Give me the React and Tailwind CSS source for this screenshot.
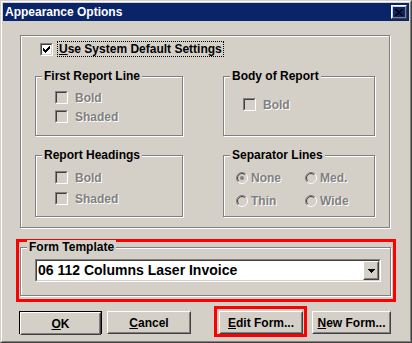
import React from 'react';

const CHECK = ['......X', '.....XX', 'X...XXX', 'XX.XXX.', 'XXXXX..', '.XXX...', '..X....'];
const CLOSE_X = ['XX....XX', '.XX..XX.', '..XXXX..', '...XX...', '..XXXX..', '.XX..XX.', 'XX....XX'];
const ARROW = ['XXXXXXX', '.XXXXX.', '..XXX..', '...X...'];

const Pixels = ({ rows, color = '#000' }) => {
  const w = rows[0].length;
  const h = rows.length;
  return (
    <svg width={w} height={h} viewBox={`0 0 ${w} ${h}`} shapeRendering="crispEdges">
      {rows.flatMap((r, y) =>
        [...r].map((c, x) =>
          c === 'X' ? <rect key={`${x}-${y}`} x={x} y={y} width="1" height="1" fill={color} /> : null
        )
      )}
    </svg>
  );
};

// classic raised 3d box
const Raised = ({ className = '', children }) => (
  <div className={`flex border border-t-white border-l-white border-b-[#404040] border-r-[#404040] ${className}`}>
    <div className="flex-1 flex items-center justify-center border border-t-[#d4d0c8] border-l-[#d4d0c8] border-b-[#808080] border-r-[#808080]">
      {children}
    </div>
  </div>
);

const Check = ({ checked, disabled }) => (
  <div className="w-[13px] h-[13px] shrink-0 flex border border-t-[#808080] border-l-[#808080] border-b-white border-r-white">
    <div
      className={`flex-1 flex items-center justify-center border border-t-[#404040] border-l-[#404040] border-b-[#d4d0c8] border-r-[#d4d0c8] ${
        disabled ? 'bg-[#d4d0c8]' : 'bg-white'
      }`}
    >
      {checked && <Pixels rows={CHECK} />}
    </div>
  </div>
);

const arc = (r, from, to) => {
  const d = r / Math.SQRT2;
  const p = { bl: [6 - d, 6 + d], tr: [6 + d, 6 - d] };
  return `M${p[from][0]} ${p[from][1]} A${r} ${r} 0 0 1 ${p[to][0]} ${p[to][1]}`;
};

const Radio = ({ checked }) => (
  <svg width="12" height="12" viewBox="0 0 12 12" className="shrink-0">
    <circle cx="6" cy="6" r="4.5" fill="#d4d0c8" />
    <path d={arc(5.5, 'bl', 'tr')} stroke="#808080" fill="none" />
    <path d={arc(5.5, 'tr', 'bl')} stroke="#ffffff" fill="none" />
    <path d={arc(4.5, 'bl', 'tr')} stroke="#404040" fill="none" />
    <path d={arc(4.5, 'tr', 'bl')} stroke="#d4d0c8" fill="none" />
    {checked && <circle cx="6" cy="6" r="2" fill="#808080" />}
  </svg>
);

const dim = 'text-[#808080] [text-shadow:1px_1px_0_#ffffff]';

const CheckRow = ({ label }) => (
  <div className="flex items-center gap-[7px] h-[13px]">
    <Check disabled />
    <span className={`${dim} leading-[14px]`}>{label}</span>
  </div>
);

const RadioRow = ({ label, checked }) => (
  <div className="flex items-center gap-[3px] w-[69px]">
    <Radio checked={checked} />
    <span className={`${dim} leading-[14px]`}>{label}</span>
  </div>
);

const Group = ({ label, className = '', children }) => (
  <div className={`border border-[#808080] shadow-[1px_1px_0_#ffffff,inset_1px_1px_0_#ffffff] ${className}`}>
    <div className="-mt-[8px] ml-[6px] px-[2px] w-fit bg-[#d4d0c8] leading-[14px]">{label}</div>
    {children}
  </div>
);

const Button = ({ children, className = '' }) => (
  <Raised className={`h-[23px] ${className}`}>
    <span className="leading-[14px]">{children}</span>
  </Raised>
);

export default function App() {
  return (
    <div className="w-[412px] h-[343px] bg-[#d4d0c8] border border-t-[#d4d0c8] border-l-[#d4d0c8] border-b-[#404040] border-r-[#404040] font-['Liberation_Sans',Arial,sans-serif] font-bold text-[12px] text-black">
      <div className="h-full flex flex-col p-px border border-t-white border-l-white border-b-[#808080] border-r-[#808080]">
        {/* Title bar */}
        <div className="h-[18px] shrink-0 bg-[#0a246a] flex items-center justify-between pl-[2px] pr-[2px]">
          <span className="text-white leading-none">Appearance Options</span>
          <Raised className="w-[16px] h-[14px]">
            <Pixels rows={CLOSE_X} />
          </Raised>
        </div>

        {/* Main frame */}
        <div className="ml-[17px] mt-[14px] w-[370px] h-[193px] pl-[14px] pt-[5px] border border-[#808080] shadow-[1px_1px_0_#ffffff,inset_1px_1px_0_#ffffff]">
          <div className="ml-[5px] flex items-center gap-[4px]">
            <Check checked />
            <span className="border border-dotted border-black px-px leading-[14px]">
              <u>U</u>se System Default Settings
            </span>
          </div>

          <div className="mt-[19px] flex gap-[40px]">
            <Group label="First Report Line" className="w-[148px] h-[60px]">
              <div className="pl-[19px] pt-[8px] flex flex-col gap-[6px]">
                <CheckRow label="Bold" />
                <CheckRow label="Shaded" />
              </div>
            </Group>
            <Group label="Body of Report" className="w-[152px] h-[60px]">
              <div className="pl-[19px] pt-[15px]">
                <CheckRow label="Bold" />
              </div>
            </Group>
          </div>

          <div className="mt-[19px] flex gap-[40px]">
            <Group label="Report Headings" className="w-[148px] h-[62px]">
              <div className="pl-[19px] pt-[9px] flex flex-col gap-[8px]">
                <CheckRow label="Bold" />
                <CheckRow label="Shaded" />
              </div>
            </Group>
            <Group label="Separator Lines" className="w-[152px] h-[62px]">
              <div className="pl-[12px] pt-[9px] grid grid-cols-[69px_69px] gap-y-[9px]">
                <RadioRow label="None" checked />
                <RadioRow label="Med." />
                <RadioRow label="Thin" />
                <RadioRow label="Wide" />
              </div>
            </Group>
          </div>
        </div>

        {/* Form template (highlighted) */}
        <div className="ml-[13px] mt-[11px] w-[380px] h-[63px] border-[3px] border-[#ff0000] pl-px pt-[5px]">
          <Group label="Form Template" className="w-[371px] h-[49px]">
            <div className="ml-[14px] mt-[5px] w-[346px] h-[23px] flex border border-t-[#808080] border-l-[#808080] border-b-white border-r-white">
              <div className="flex-1 flex items-stretch bg-white border border-t-[#404040] border-l-[#404040] border-b-[#d4d0c8] border-r-[#d4d0c8]">
                <span className="flex-1 flex items-center pl-px text-[14px]">06 112 Columns Laser Invoice</span>
                <Raised className="w-[16px] bg-[#d4d0c8]">
                  <Pixels rows={ARROW} />
                </Raised>
              </div>
            </div>
          </Group>
        </div>

        {/* Buttons */}
        <div className="mt-[4px] flex items-start">
          <div className="ml-[16px] mt-[5px] w-[83px] h-[23px] flex border border-black">
            <Button className="flex-1">
              <u>O</u>K
            </Button>
          </div>
          <Button className="ml-[5px] mt-[5px] w-[84px]">
            <u>C</u>ancel
          </Button>
          <div className="ml-[23px] w-[93px] h-[31px] border-[3px] border-[#ff0000] pl-[2px] pt-[2px]">
            <Button className="w-[84px]">
              <u>E</u>dit Form...
            </Button>
          </div>
          <Button className="ml-[5px] mt-[5px] w-[79px]">
            <u>N</u>ew Form...
          </Button>
        </div>
      </div>
    </div>
  );
}
